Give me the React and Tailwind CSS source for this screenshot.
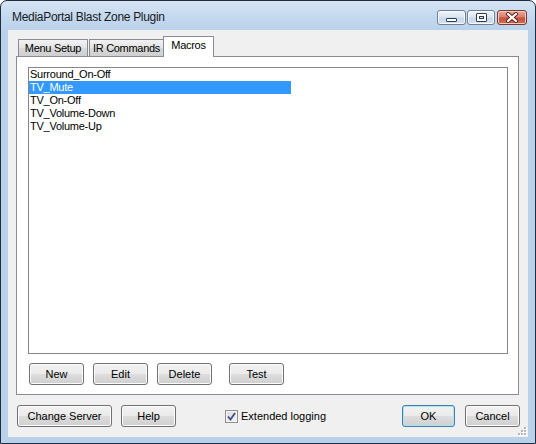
import React from "react";

const macros = ["Surround_On-Off", "TV_Mute", "TV_On-Off", "TV_Volume-Down", "TV_Volume-Up"];

// Vista style push button
const Btn = ({ children, className = "", primary }) => (
  <button
    className={`h-[22px] rounded-[3px] border text-[11px] leading-none text-black bg-[linear-gradient(#f2f2f2_0%,#ebebeb_48%,#dddddd_52%,#cfcfcf_100%)] ${
      primary
        ? "border-[#3c7fb1] shadow-[inset_0_0_0_1px_#aee3f8]"
        : "border-[#707070] shadow-[inset_0_0_0_1px_#fcfcfc]"
    } ${className}`}
  >
    {children}
  </button>
);

const Tab = ({ children, active, className = "" }) =>
  active ? (
    <div
      className={`relative z-10 -mb-px h-[21px] border border-b-0 border-[#898c95] bg-white pb-[4px] flex items-center justify-center text-[11px] tracking-[-0.3px] ${className}`}
    >
      {children}
    </div>
  ) : (
    <div
      className={`h-[17px] border border-b-0 border-[#898c95] bg-[linear-gradient(#f2f2f2,#e3e3e3_50%,#d9d9d9_51%,#cfcfcf)] flex items-center justify-center text-[11px] tracking-[-0.3px] ${className}`}
    >
      {children}
    </div>
  );

const CaptionBtn = ({ children, close, className = "" }) => (
  <div
    className={`h-[15px] rounded-[3px] border flex items-center justify-center ${
      close
        ? "border-[#7a3a30] bg-[linear-gradient(#e9a99b,#d8806d_45%,#c5513c_55%,#d36e56)] shadow-[inset_0_0_0_1px_#f3c8bd]"
        : "border-[#6f7f95] bg-[linear-gradient(#eef3fa,#dbe5f1_45%,#c9d7e8_55%,#d5e1ef)] shadow-[inset_0_0_0_1px_#f7fafd]"
    } ${className}`}
  >
    {children}
  </div>
);

export default function App() {
  return (
    <div className="w-[536px] h-[444px] bg-white font-['Liberation_Sans',Arial,sans-serif] text-black">
      <div className="w-full h-full rounded-t-[7px] border border-[#1f2d3c] bg-[linear-gradient(#d6e5f5_0px,#c3d8ef_16px,#b9d1eb_30px,#b9d1ea)] flex flex-col">
        {/* Title bar */}
        <div className="h-[29px] flex items-start pl-[11px] pr-[8px]">
          <span className="mt-[8px] text-[12px] leading-[16px] text-[#1a1a1a] tracking-[-0.3px]">
            MediaPortal Blast Zone Plugin
          </span>
          <div className="ml-auto mt-[9px] flex gap-[1px]">
            <CaptionBtn className="w-[29px]">
              <div className="mt-[5px] w-[11px] h-[4px] rounded-[1px] border border-[#2f3d52] bg-white" />
            </CaptionBtn>
            <CaptionBtn className="w-[28px]">
              <div className="w-[11px] h-[9px] rounded-[1px] border border-[#2f3d52] bg-white flex items-center justify-center">
                <div className="w-[5px] h-[3px] border border-[#2f3d52] bg-[#dbe5f1]" />
              </div>
            </CaptionBtn>
            <CaptionBtn close className="ml-[1px] w-[30px]">
              <svg width="14" height="11" viewBox="0 0 14 11">
                <path d="M3 2 L11 9 M11 2 L3 9" stroke="#5a2119" strokeWidth="4" strokeLinecap="round" />
                <path d="M3 2 L11 9 M11 2 L3 9" stroke="#ffffff" strokeWidth="2.2" strokeLinecap="round" />
              </svg>
            </CaptionBtn>
          </div>
        </div>

        {/* Client area */}
        <div className="relative mx-[7px] mb-[6px] flex-1 bg-[#f0f0f0] px-[8px] pt-[6px] flex flex-col">
          {/* Tabs */}
          <div className="flex items-end pl-[2px] h-[20px]">
            <Tab className="w-[70px]">Menu Setup</Tab>
            <Tab className="ml-[1px] w-[75px]">IR Commands</Tab>
            <Tab active className="-ml-px w-[51px]">
              Macros
            </Tab>
          </div>

          {/* Tab page */}
          <div className="h-[339px] w-[503px] border border-[#898c95] bg-white pt-[10px] pl-[11px] pr-[10px] flex flex-col">
            <div className="h-[287px] border border-[#828790] bg-white">
              {macros.map((m, i) => (
                <div
                  key={m}
                  className={`h-[13px] w-[262px] pl-[1px] text-[11px] leading-[13px] tracking-[-0.25px] ${
                    i === 1 ? "bg-[#3399ff] text-white" : "text-black"
                  }`}
                >
                  {m}
                </div>
              ))}
            </div>
            <div className="mt-[9px] flex pl-[1px]">
              <Btn className="w-[55px]">New</Btn>
              <Btn className="ml-[9px] w-[55px]">Edit</Btn>
              <Btn className="ml-[9px] w-[55px]">Delete</Btn>
              <Btn className="ml-[17px] w-[55px]">Test</Btn>
            </div>
          </div>

          {/* Bottom row */}
          <div className="mt-[10px] flex items-center">
            <Btn className="ml-[1px] w-[95px]">Change Server</Btn>
            <Btn className="ml-[9px] w-[55px]">Help</Btn>
            <label className="ml-[49px] flex items-center">
              <span className="w-[13px] h-[13px] border border-[#8e8f8f] bg-[linear-gradient(135deg,#d8d8d8,#f7f7f7)] shadow-[inset_0_0_0_1px_#f4f4f4] flex items-center justify-center">
                <svg width="9" height="9" viewBox="0 0 9 9">
                  <path d="M1 4.5 L3.5 7.5 L8 1" fill="none" stroke="#3f4d8a" strokeWidth="1.8" />
                </svg>
              </span>
              <span className="ml-[3px] text-[11px]">Extended logging</span>
            </label>
            <Btn primary className="ml-auto w-[53px]">OK</Btn>
            <Btn className="ml-[10px] w-[55px]">Cancel</Btn>
          </div>

          {/* Size grip */}
          <svg className="absolute right-[1px] bottom-[1px]" width="10" height="10" viewBox="0 0 10 10">
            {[
              [7, 1],
              [7, 4],
              [4, 4],
              [7, 7],
              [4, 7],
              [1, 7],
            ].map(([x, y]) => (
              <g key={`${x}-${y}`}>
                <rect x={x + 1} y={y + 1} width="2" height="2" fill="#ffffff" />
                <rect x={x} y={y} width="2" height="2" fill="#b8b8b8" />
              </g>
            ))}
          </svg>
        </div>
      </div>
    </div>
  );
}
